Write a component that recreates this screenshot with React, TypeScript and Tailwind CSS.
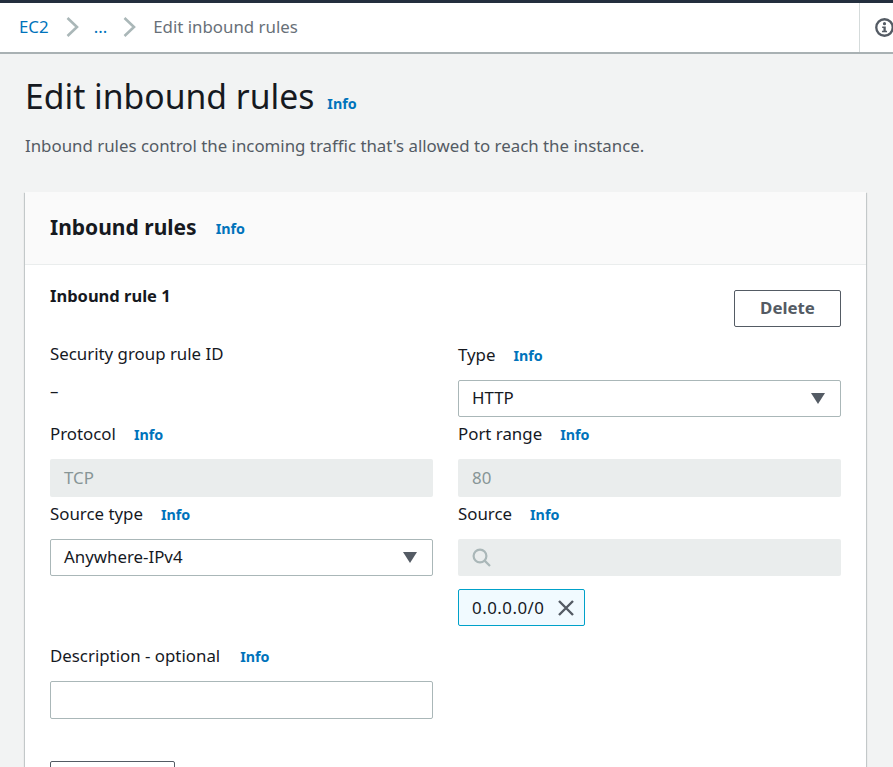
const font = "font-['Noto_Sans',sans-serif]";

function Info({ className = '' }: { className?: string }) {
  return <a className={`text-[14.3px] leading-none font-bold text-[#0073bb] ${className}`}>Info</a>;
}

function Label({ text, gap = 'ml-[18px]' }: { text: string; gap?: string }) {
  return (
    <div className="h-[24px] mb-[13px] flex items-center text-[16.85px] text-[#16191f]">
      <span className="-mt-[1px]">{text}</span>
      <Info className={`mt-[2px] ${gap}`} />
    </div>
  );
}

function Select({ value }: { value: string }) {
  return (
    <div className="h-[37px] flex items-center justify-between pl-[13px] pr-[15px] bg-white border border-[#aab7b8] rounded-[2px] text-[16.85px] text-[#16191f]">
      <span className="-mt-[1px]">{value}</span>
      <svg width="14" height="11" viewBox="0 0 14 11"><path d="M0 0h14L7 11z" fill="#545b64" /></svg>
    </div>
  );
}

function Disabled({ value }: { value: string }) {
  return (
    <div className="h-[38px] flex items-center pl-[14px] bg-[#eaeded] rounded-[2px] text-[16.85px] text-[#879596]">{value}</div>
  );
}

export default function App() {
  return (
    <div className={`h-[767px] w-[893px] overflow-hidden bg-[#f2f3f3] ${font}`}>
      <div className="h-[3px] bg-[#232f3e]" />
      <header className="h-[51px] flex bg-white border-b-2 border-[#a9b1b3]">
        <nav className="flex-1 flex items-center pl-[19px] pb-[1px] text-[16.85px]">
          <a className="text-[#0073bb]">EC2</a>
          <svg className="ml-[17px]" width="13" height="20" viewBox="0 0 13 20" fill="none" stroke="#aab7b8" strokeWidth="2.6"><path d="M1.5 1l9.5 9-9.5 9" /></svg>
          <a className="ml-[15px] text-[#0073bb]">...</a>
          <svg className="ml-[16px]" width="13" height="20" viewBox="0 0 13 20" fill="none" stroke="#aab7b8" strokeWidth="2.6"><path d="M1.5 1l9.5 9-9.5 9" /></svg>
          <span className="ml-[17px] text-[#687078]">Edit inbound rules</span>
        </nav>
        <div className="w-[34px] border-l border-[#d5dbdb] flex items-center pl-[15px] overflow-hidden">
          <svg className="shrink-0" width="19" height="19" viewBox="0 0 18 18" fill="none">
            <circle cx="9" cy="9" r="7.8" stroke="#545b64" strokeWidth="2.2" />
            <circle cx="9" cy="5.4" r="1.5" fill="#545b64" />
            <path d="M6.8 8h3.4v4h1.2v1.6H6.6V12h1.4V9.4H6.8z" fill="#545b64" />
          </svg>
        </div>
      </header>

      <main className="px-[25px]">
        <div className="flex items-baseline pt-[19px]">
          <h1 className="text-[33.7px] leading-[46px] font-normal text-[#16191f]">Edit inbound rules</h1>
          <Info className="ml-[13px]" />
        </div>
        <p className="mt-[15px] text-[16.85px] leading-[24px] text-[#545b64]">
          Inbound rules control the incoming traffic that's allowed to reach the instance.
        </p>

        <section className="mt-[34px] w-[841px] bg-white shadow-[0_1px_1px_0_rgba(0,28,36,0.3),1px_1px_1px_0_rgba(0,28,36,0.15),-1px_1px_1px_0_rgba(0,28,36,0.15)]">
          <div className="h-[73px] flex items-center px-[25px] bg-[#fafafa] border-b border-[#eaeded]">
            <h2 className="text-[21px] font-bold text-[#16191f]">Inbound rules</h2>
            <Info className="ml-[19px] mt-[2px]" />
          </div>
          <div className="px-[25px] pb-10">
            <div className="h-[78px] flex justify-between items-start">
              <h3 className="mt-[19px] text-[16.5px] leading-[24px] font-bold text-[#16191f]">Inbound rule 1</h3>
              <button className="mt-[25px] w-[107px] h-[37px] pb-[2px] bg-white border border-[#545b64] rounded-[2px] text-[16.85px] font-bold text-[#545b64]">Delete</button>
            </div>

            <div className="grid grid-cols-2 gap-x-[25px] gap-y-[5px]">
              <div>
                <div className="h-[24px] -mt-[1px] text-[16.85px] leading-[24px] text-[#16191f]">Security group rule ID</div>
                <div className="mt-[13px] text-[16.85px] leading-[24px] text-[#16191f]">–</div>
              </div>
              <div>
                <Label text="Type" />
                <Select value="HTTP" />
              </div>
              <div>
                <Label text="Protocol" />
                <Disabled value="TCP" />
              </div>
              <div>
                <Label text="Port range" />
                <Disabled value="80" />
              </div>
              <div>
                <Label text="Source type" />
                <Select value="Anywhere-IPv4" />
              </div>
              <div>
                <Label text="Source" />
                <div className="h-[37px] flex items-center pl-[14px] bg-[#eaeded] rounded-[2px]">
                  <svg width="19" height="19" viewBox="0 0 19 19" fill="none" stroke="#aab7b8" strokeWidth="2.2">
                    <circle cx="8" cy="8" r="6.4" />
                    <path d="M12.6 12.6L18 18" />
                  </svg>
                </div>
                <div className="mt-[13px] w-[127px] h-[37px] flex items-center justify-between pl-[13px] pr-[9px] bg-[#f1faff] border border-[#00a1c9] rounded-[2px] text-[16.85px] tracking-[0.5px] text-[#16191f]">
                  <span>0.0.0.0/0</span>
                  <svg width="18" height="18" viewBox="0 0 18 18" fill="none" stroke="#545b64" strokeWidth="2.4"><path d="M2 2l14 14M16 2L2 16" /></svg>
                </div>
              </div>
            </div>

            <div className="mt-[18px] w-[383px]">
              <Label text="Description - optional" gap="ml-[20px]" />
              <div className="h-[38px] bg-white border border-[#aab7b8] rounded-[2px]" />
            </div>

            <button className="mt-[42px] block w-[125px] h-[37px] bg-white border border-[#545b64] rounded-[2px]" />
          </div>
        </section>
      </main>
    </div>
  );
}
